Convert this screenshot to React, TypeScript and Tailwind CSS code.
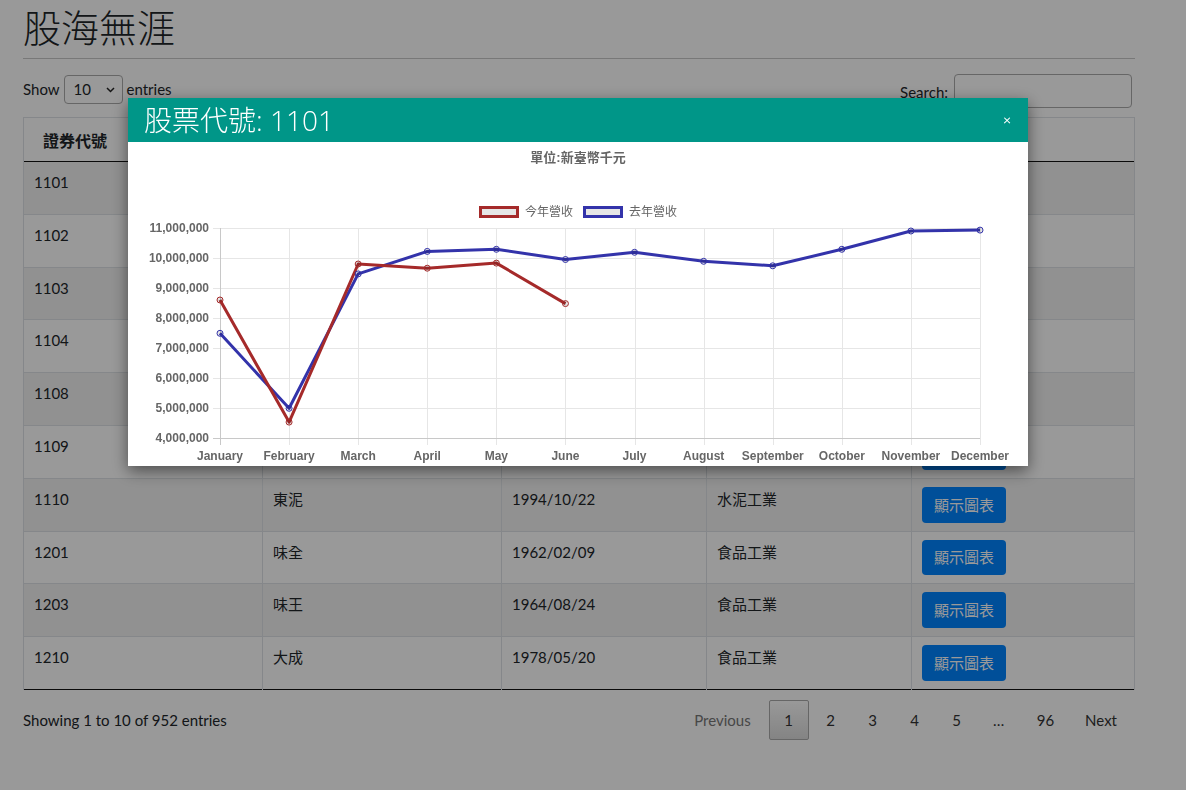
import React from 'react';

const rows = [
  ['1101', '台泥', '1962/02/09', '水泥工業'],
  ['1102', '亞泥', '1962/06/08', '水泥工業'],
  ['1103', '嘉泥', '1969/11/14', '水泥工業'],
  ['1104', '環泥', '1971/02/01', '水泥工業'],
  ['1108', '幸福', '1990/06/06', '水泥工業'],
  ['1109', '信大', '1991/12/05', '水泥工業'],
  ['1110', '東泥', '1994/10/22', '水泥工業'],
  ['1201', '味全', '1962/02/09', '食品工業'],
  ['1203', '味王', '1964/08/24', '食品工業'],
  ['1210', '大成', '1978/05/20', '食品工業'],
];

const months = ['January', 'February', 'March', 'April', 'May', 'June', 'July', 'August', 'September', 'October', 'November', 'December'];
// values in millions (NT$ thousand)
const thisYear = [8.6, 4.53, 9.8, 9.66, 9.83, 8.48];
const lastYear = [7.49, 4.99, 9.47, 10.22, 10.29, 9.95, 10.19, 9.89, 9.74, 10.29, 10.9, 10.93];

const RED = '#a52a2a';
const BLUE = '#3333aa';

const px = (i: number) => 220 + (i * 760) / 11;
const py = (v: number) => 228 + (11 - v) * 30;

const RevenueChart: React.FC = () => {
  const ticks = [11, 10, 9, 8, 7, 6, 5, 4];
  const path = (d: number[]) => d.map((v, i) => `${i ? 'L' : 'M'}${px(i)},${py(v)}`).join(' ');
  const label = { fontFamily: 'Liberation Sans, Arial, sans-serif', fontSize: 12, fontWeight: 700, fill: '#666' };

  return (
    <svg width={900} height={246} viewBox="128 220 900 246" className="block">
      {ticks.map((t) => (
        <line key={t} x1={213} x2={980} y1={py(t) + 0.5} y2={py(t) + 0.5} stroke="#e6e6e6" />
      ))}
      {months.map((m, i) => (
        <line key={m} x1={Math.round(px(i)) + 0.5} x2={Math.round(px(i)) + 0.5} y1={228} y2={445} stroke="#e6e6e6" />
      ))}
      <line x1={220.5} x2={220.5} y1={228} y2={445} stroke="#c8c8c8" />
      <line x1={213} x2={980} y1={438.5} y2={438.5} stroke="#c8c8c8" />

      {ticks.map((t) => (
        <text key={t} x={209} y={py(t) + 4} textAnchor="end" style={label}>
          {(t * 1000000).toLocaleString('en-US')}
        </text>
      ))}
      {months.map((m, i) => (
        <text key={m} x={px(i)} y={460} textAnchor="middle" style={label}>
          {m}
        </text>
      ))}

      <path d={path(lastYear)} fill="none" stroke={BLUE} strokeWidth={3} strokeLinejoin="round" />
      <path d={path(thisYear)} fill="none" stroke={RED} strokeWidth={3} strokeLinejoin="round" />
      {lastYear.map((v, i) => (
        <circle key={'b' + i} cx={px(i)} cy={py(v)} r={3} fill="rgba(0,0,0,0.1)" stroke={BLUE} strokeWidth={1} />
      ))}
      {thisYear.map((v, i) => (
        <circle key={'r' + i} cx={px(i)} cy={py(v)} r={3} fill="rgba(0,0,0,0.1)" stroke={RED} strokeWidth={1} />
      ))}
    </svg>
  );
};

const App: React.FC = () => {
  return (
    <div className="relative min-h-[790px] bg-white font-['Lato','Noto_Sans_CJK_TC',sans-serif] text-[15px] text-[#212529]">
      <div className="ml-[23px] w-[1112px] pt-[2px]">
        <h1 className="font-['Noto_Sans_CJK_TC',serif] text-[38px] leading-[48px] font-light">股海無涯</h1>
        <hr className="mt-[8px] border-t border-[#c9c9c9]" />

        <div className="mt-[15px] flex items-start justify-between">
          <div className="flex items-center gap-[4px] pt-[1px]">
            <span>Show</span>
            <div className="flex h-[29px] w-[59px] items-center justify-between rounded-[4px] border border-[#aaa] pl-[9px] pr-[7px]">
              <span>10</span>
              <svg width="9" height="6" viewBox="0 0 9 6">
                <path d="M1 1l3.5 3.5L8 1" fill="none" stroke="#222" strokeWidth="1.5" />
              </svg>
            </div>
            <span>entries</span>
          </div>
          <div className="mr-[3px] flex items-center gap-[6px]">
            <span className="mt-[3px]">Search:</span>
            <div className="h-[34px] w-[178px] rounded-[4px] border border-[#aaa]" />
          </div>
        </div>

        <table className="mt-[9px] w-full border-collapse border border-[#dee2e6]">
          <thead>
            <tr className="h-[44px] border-b border-b-[#111]">
              <th className="w-[239px] border-x border-[#dee2e6] pl-[19px] text-left font-['Noto_Sans_CJK_TC'] text-[16px] font-bold leading-[24px]">證券代號</th>
              <th className="w-[239px] border-x border-[#dee2e6] pl-[19px] text-left font-bold leading-[24px]">證券名稱</th>
              <th className="w-[205px] border-x border-[#dee2e6] pl-[19px] text-left font-bold leading-[24px]">上市日期</th>
              <th className="w-[205px] border-x border-[#dee2e6] pl-[19px] text-left font-bold leading-[24px]">產業別</th>
              <th className="border-x border-[#dee2e6] pl-[19px] text-left font-bold leading-[24px]">營收圖表</th>
            </tr>
          </thead>
          <tbody>
            {rows.map((r, i) => (
              <tr key={r[0]} className={`border-b border-[#dee2e6] ${i % 2 === 0 ? 'bg-[#f2f2f2]' : 'bg-white'} ${i === rows.length - 1 ? 'border-b-[#111]' : ''}`}>
                {r.map((c, j) => (
                  <td key={j} className="border-x border-[#dee2e6] px-[10px] pt-[8px] align-top leading-[24px]">
                    {c}
                  </td>
                ))}
                <td className="border-x border-[#dee2e6] px-[10px] py-[8px] align-top">
                  <button className="h-[35.8px] rounded-[4px] bg-[#0084ff] px-[12px] text-[15px] leading-[24px] text-white">顯示圖表</button>
                </td>
              </tr>
            ))}
          </tbody>
        </table>

        <div className="mt-[10px] flex items-center justify-between">
          <span>Showing 1 to 10 of 952 entries</span>
          <div className="mr-[2px] flex items-center text-[#333]">
            <span className="px-[16px] py-[8px] text-[#777]">Previous</span>
            <span className="ml-[2px] flex h-[40px] w-[40px] items-center justify-center rounded-[2px] border border-[#aaa] bg-linear-to-b from-white to-[#dcdcdc]">1</span>
            {['2', '3', '4', '5'].map((p) => (
              <span key={p} className="ml-[2px] w-[40px] py-[8px] text-center">{p}</span>
            ))}
            <span className="ml-[2px] w-[40px] py-[8px] text-center">…</span>
            <span className="ml-[2px] pl-[16px] pr-[15px] py-[8px]">96</span>
            <span className="ml-[2px] pl-[14px] pr-[16px] py-[8px]">Next</span>
          </div>
        </div>
      </div>

      {/* modal backdrop */}
      <div className="fixed inset-0 z-10 bg-black/40" />

      <div className="fixed left-[128px] top-[98px] z-20 w-[900px] bg-white shadow-[0_5px_15px_rgba(0,0,0,0.5)]">
        <div className="flex h-[44px] items-center justify-between bg-[#009688] pl-[16px] pr-[17px] text-white">
          <span className="font-['Open_Sans','Noto_Sans_CJK_TC',sans-serif] text-[28px] leading-none font-light">股票代號: 1101</span>
          <span className="text-[14px] leading-none">×</span>
        </div>
        <div className="flex flex-col items-center font-['Liberation_Sans','Noto_Sans_CJK_TC',sans-serif] text-[12px] text-[#666]">
          <div className="mt-[8px] text-[13px] font-bold leading-[16px]">單位:新臺幣千元</div>
          <div className="mt-[40px] flex h-[12px] items-center gap-[10px] leading-[12px]">
            <div className="flex items-center gap-[6px]">
              <span className="h-[12px] w-[40px] border-[3px] border-[#a52a2a] bg-[#e6e6e6]" />
              <span>今年營收</span>
            </div>
            <div className="flex items-center gap-[6px]">
              <span className="h-[12px] w-[40px] border-[3px] border-[#3333aa] bg-[#e6e6e6]" />
              <span>去年營收</span>
            </div>
          </div>
          <div className="mt-[2px]">
            <RevenueChart />
          </div>
        </div>
      </div>
    </div>
  );
};

export default App;
